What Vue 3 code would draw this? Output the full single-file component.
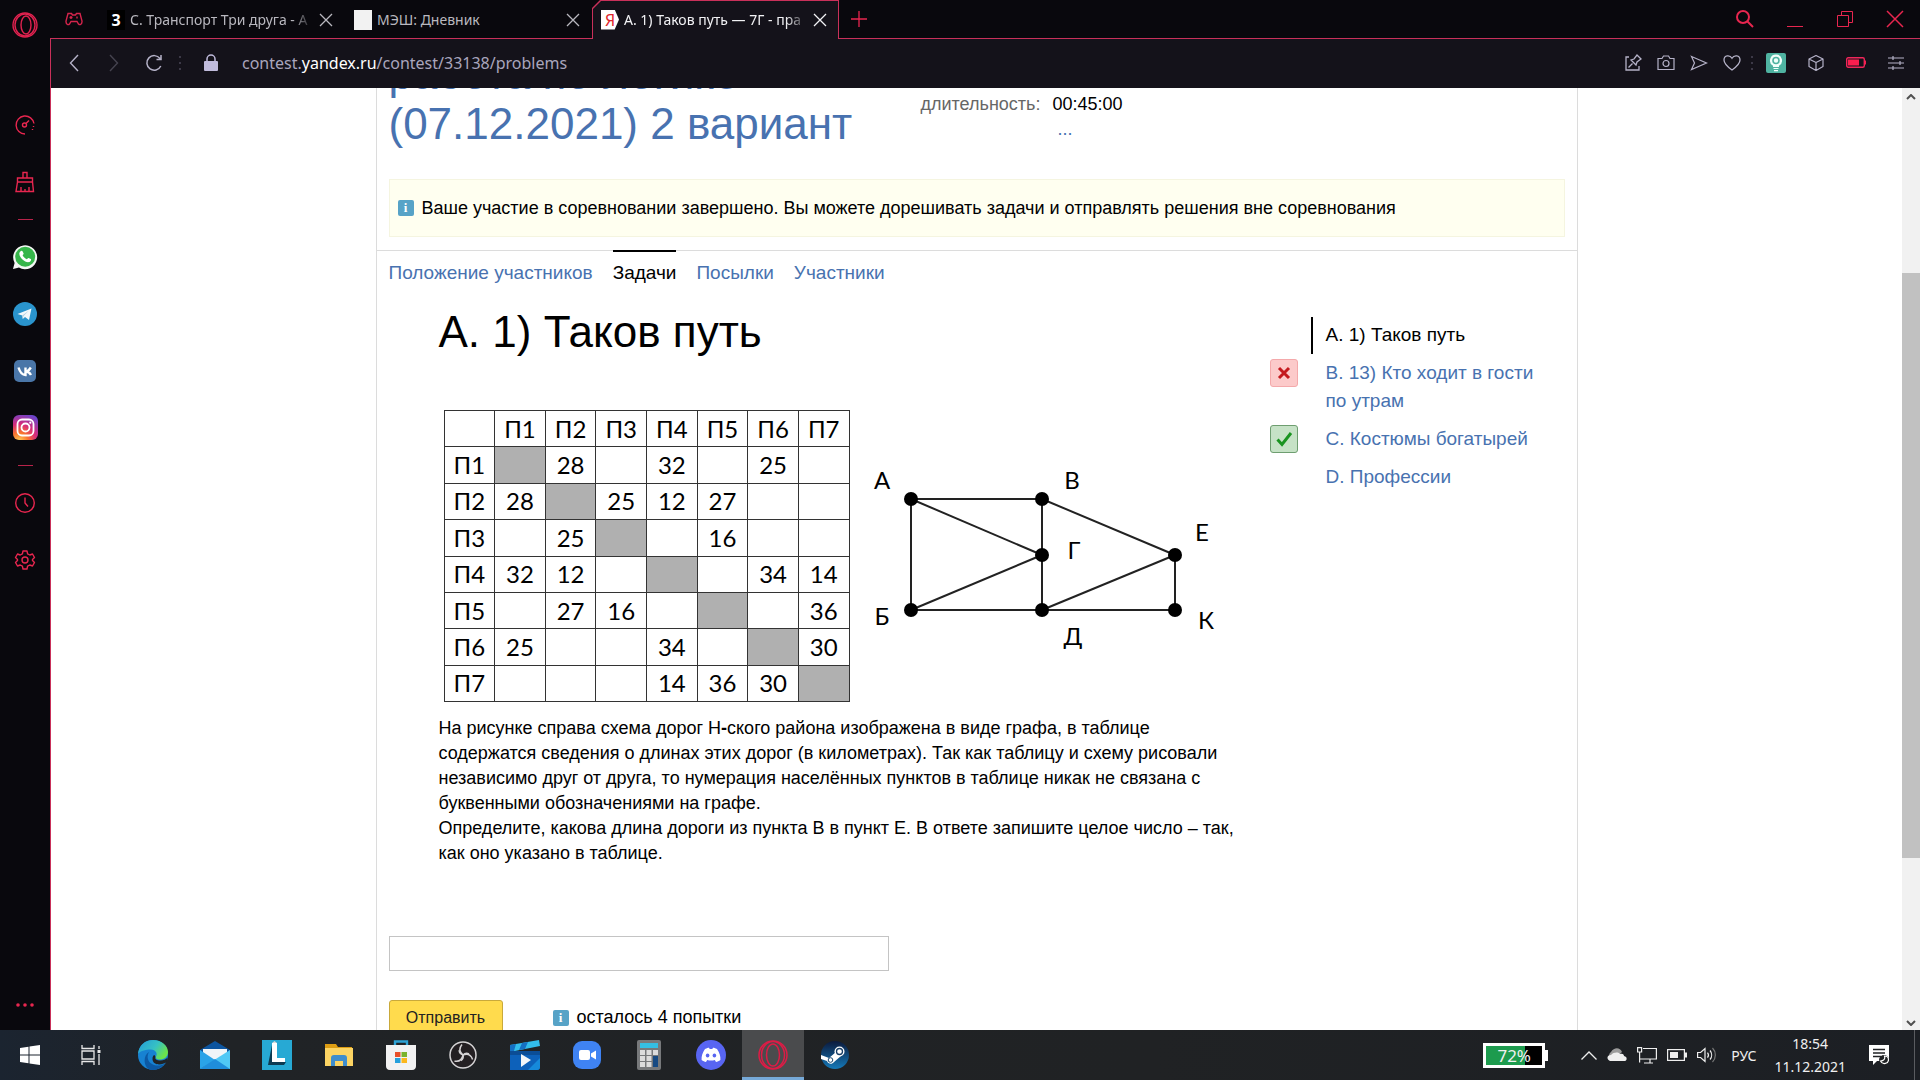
<template>
    <div class="desktop">
        <div class="browser">
            <nav class="sidebar" aria-label="Боковая панель">
                <a href="#" class="side-item side-logo" aria-label="Opera">
                    <svg width="26" height="30" viewBox="0 0 26 30" fill="none" stroke="#e0224f" stroke-width="1.4">
                        <ellipse cx="13" cy="15" rx="12" ry="12" />
                        <ellipse cx="13" cy="15" rx="10" ry="11" />
                        <ellipse cx="14" cy="15" rx="5" ry="9" />
                    </svg>
                </a>
                <a href="#" class="side-item" aria-label="Скорость">
                    <svg width="22" height="22" viewBox="0 0 22 22" fill="none" stroke="#e8264f" stroke-width="1.4">
                        <path d="M11 20A9 9 0 1 1 20 9.500M19.500 12v1M18.500 15v1" />
                        <circle cx="10.500" cy="11" r="2" />
                        <path d="M12 9.500L15 6.500" />
                    </svg>
                </a>
                <a href="#" class="side-item" aria-label="Очистка">
                    <svg width="22" height="22" viewBox="0 0 22 22" fill="none" stroke="#e8264f" stroke-width="1.400">
                        <path d="M9 7V1.500h4V7M3.500 7h15v4h-15zM3.500 11L2 20.500h17.500L18.500 11M7 20v-4M11 20v-2M15 20v-4" />
                    </svg>
                </a>
                <hr class="side-line">
                <a href="#" class="side-item" aria-label="WhatsApp">
                    <svg width="26" height="26" viewBox="0 0 26 26">
                        <path d="M1 25L2.600 19A12 12 0 1 1 7 23.600z" fill="#f4f7f4" />
                        <circle cx="13.200" cy="12.800" r="10" fill="#36b64a" />
                        <path d="M8.300 7.600c1-1.300 2-1 2.500.2l.8 1.800c.2.600-.8 1.300-1 1.700.8 1.800 2.300 3.200 4.200 3.900.5-.3 1.200-1.500 1.800-1.300l2.200 1.100c.8.600-.2 2.500-1.500 3-3.900 1.200-10.600-4.600-9.900-8.900.1-.5.500-1.100.9-1.500z" fill="#fff" />
                    </svg>
                </a>
                <a href="#" class="side-item" aria-label="Telegram">
                    <svg width="24" height="24" viewBox="0 0 24 24">
                        <circle cx="12" cy="12" r="12" fill="#2a94cd" />
                        <path d="M4.500 12L18.500 6.500 16 18l-4-3-2.200 2-.5-3.600z" fill="#f3f8fb" />
                        <path d="M9.300 13.400L16 8.600 10.500 14l-.7 3z" fill="#b3cfe0" />
                    </svg>
                </a>
                <a href="#" class="side-item" aria-label="ВКонтакте">
                    <svg width="22" height="22" viewBox="0 0 22 22">
                        <rect width="22" height="22" rx="5" fill="#4a76a8" />
                        <path d="M4.500 7.500c1.500 5 3.500 7.500 7 7.500V7.500M12 11.500c2 0 3.200-1.500 4.800-4M12 11.500c2.200 0 3.700 1.300 5 3.500" fill="none" stroke="#fff" stroke-width="2.400" />
                    </svg>
                </a>
                <a href="#" class="side-item" aria-label="Instagram">
                    <svg width="25" height="25" viewBox="0 0 25 25">
                        <defs>
                            <radialGradient id="insta" cx=".25" cy="1.050" r="1.150">
                                <stop offset="0" stop-color="#ffd25a" />
                                <stop offset=".3" stop-color="#f9752f" />
                                <stop offset=".6" stop-color="#d62b7b" />
                                <stop offset="1" stop-color="#6a45cc" />
                            </radialGradient>
                        </defs>
                        <rect width="25" height="25" rx="6" fill="url(#insta)" />
                        <rect x="4.500" y="4.500" width="16" height="16" rx="4.500" fill="none" stroke="#fff" stroke-width="1.800" />
                        <circle cx="12.500" cy="12.500" r="4" fill="none" stroke="#fff" stroke-width="1.800" />
                        <circle cx="17.300" cy="7.700" r="1.100" fill="#fff" />
                    </svg>
                </a>
                <hr class="side-line">
                <a href="#" class="side-item" aria-label="История">
                    <svg width="22" height="22" viewBox="0 0 22 22" fill="none" stroke="#e8264f" stroke-width="1.400">
                        <circle cx="11" cy="11" r="9.300" />
                        <path d="M11 5.500V11l3 3.500" />
                    </svg>
                </a>
                <a href="#" class="side-item" aria-label="Настройки">
                    <svg width="22" height="22" viewBox="0 0 22 22" fill="none" stroke="#e8264f" stroke-width="1.400" stroke-linejoin="round">
                        <path d="M9 2h4l.6 2.800 2.200 1.200 2.700-1 2 3.500-2 1.900v1.200l2 1.900-2 3.500-2.700-1-2.200 1.200L13 20H9l-.6-2.800L6.200 16l-2.700 1-2-3.500 2-1.900v-1.200l-2-1.900 2-3.500 2.700 1 2.200-1.200z" />
                        <circle cx="11" cy="11" r="3" />
                    </svg>
                </a>
                <a href="#" class="side-item side-more" aria-label="Ещё">
                    <svg width="20" height="4" viewBox="0 0 20 4" fill="#e8264f">
                        <circle cx="3" cy="2" r="1.800" />
                        <circle cx="10" cy="2" r="1.800" />
                        <circle cx="17" cy="2" r="1.800" />
                    </svg>
                </a>
            </nav>

            <div class="window">
                <div class="tabs">
                    <button class="corner" aria-label="GX">
                        <svg width="18" height="14" viewBox="0 0 18 14" fill="none" stroke="#d5244c" stroke-width="1.400">
                            <path d="M3 1.500h3.500l1 1.500h3l1-1.500H15L17 9c.2 3-2 4.500-3.500 3L12 9.500H6L4.500 12C3 13.500.800 12 1 9z" />
                            <path d="M4.500 5.500h3M6 4v3M12 4.500v2" />
                        </svg>
                    </button>
                    <div v-for="tab in tabs" :key="tab.title" class="tab" :class="{ active: tab.active }">
                        <span v-if="tab.icon === 'three'" class="fav fav-three">3</span>
                        <span v-else-if="tab.icon === 'blank'" class="fav fav-blank"></span>
                        <span v-else class="fav fav-ya">Я</span>
                        <span class="tab-title" :class="{ fade: tab.long }">{{ tab.title }}</span>
                        <button class="tab-close" aria-label="Закрыть вкладку">
                            <svg width="14" height="14" viewBox="0 0 14 14" stroke="currentColor" stroke-width="1.300">
                                <path d="M1 1l12 12M13 1L1 13" />
                            </svg>
                        </button>
                    </div>
                    <button class="new-tab" aria-label="Новая вкладка">
                        <svg width="16" height="16" viewBox="0 0 16 16" stroke="#e8264f" stroke-width="1.300"><path d="M8 0v16M0 8h16" /></svg>
                    </button>
                    <div class="controls">
                        <button aria-label="Поиск">
                            <svg width="20" height="20" viewBox="0 0 20 20" fill="none" stroke="#e8264f" stroke-width="2">
                                <circle cx="8" cy="8" r="6" /><path d="M12.500 12.500L18 18" />
                            </svg>
                        </button>
                        <button aria-label="Свернуть">
                            <svg width="18" height="18" viewBox="0 0 18 18" stroke="#e8264f"><path d="M1 16.500h16" /></svg>
                        </button>
                        <button aria-label="Развернуть">
                            <svg width="18" height="18" viewBox="0 0 18 18" fill="none" stroke="#e8264f">
                                <path d="M1.500 5.500h11v11h-11zM5.500 5V1.500h11v11H13" />
                            </svg>
                        </button>
                        <button aria-label="Закрыть">
                            <svg width="18" height="18" viewBox="0 0 18 18" stroke="#e8264f" stroke-width="1.500"><path d="M1 1l16 16M17 1L1 17" /></svg>
                        </button>
                    </div>
                </div>

                <div class="toolbar">
                    <button class="nav-btn" aria-label="Назад">
                        <svg width="10" height="18" viewBox="0 0 10 18" fill="none" stroke="#b5b2c8" stroke-width="1.400"><path d="M9 1L1.500 9 9 17" /></svg>
                    </button>
                    <button class="nav-btn" aria-label="Вперёд">
                        <svg width="10" height="18" viewBox="0 0 10 18" fill="none" stroke="#45434f" stroke-width="1.400"><path d="M1 1l7.500 8L1 17" /></svg>
                    </button>
                    <button class="nav-btn" aria-label="Обновить">
                        <svg width="18" height="18" viewBox="0 0 18 18" fill="none" stroke="#b5b2c8" stroke-width="1.500">
                            <path d="M15.800 12A7.300 7.300 0 1 1 15 4.500M16 1v4.500h-4.500" />
                        </svg>
                    </button>
                    <span class="dots"></span>
                    <svg class="lock" width="14" height="18" viewBox="0 0 14 18">
                        <rect x="0" y="7" width="14" height="10" rx="1" fill="#c0bbdc" />
                        <path d="M3 8V5a4 4 0 0 1 8 0v3" fill="none" stroke="#c0bbdc" stroke-width="1.500" />
                    </svg>
                    <div class="url">contest.<b>yandex.ru</b>/contest/33138/problems</div>
                    <button class="tool" aria-label="Закрепить">
                        <svg width="18" height="18" viewBox="0 0 18 18" fill="none" stroke="#b5b2c8" stroke-width="1.300">
                            <path d="M5 3H2v13h13v-4M4.500 13.500L8.500 9.500M7 6l5 5 1-3 4-3-4-4-3 4z" />
                        </svg>
                    </button>
                    <button class="tool" aria-label="Снимок">
                        <svg width="18" height="16" viewBox="0 0 18 16" fill="none" stroke="#b5b2c8" stroke-width="1.200">
                            <path d="M1 3.500h4L6.500 1h5L13 3.500h4v11H1z" /><circle cx="9" cy="8.500" r="3" />
                        </svg>
                    </button>
                    <button class="tool" aria-label="Мой поток">
                        <svg width="18" height="16" viewBox="0 0 18 16" fill="none" stroke="#b5b2c8" stroke-width="1.200"><path d="M1.500 1.500L16.500 8l-15 6.500L4.500 8z" /></svg>
                    </button>
                    <button class="tool" aria-label="В закладки">
                        <svg width="18" height="16" viewBox="0 0 18 16" fill="none" stroke="#b5b2c8" stroke-width="1.300">
                            <path d="M9 3.200C7-.3 1-.2 1 5c0 4 4.500 7.500 8 10 3.500-2.500 8-6 8-10 0-5.200-6-5.300-8-1.800z" />
                        </svg>
                    </button>
                    <span class="dots dots-narrow"></span>
                    <button class="tool tool-wide" aria-label="Расширение">
                        <svg width="20" height="20" viewBox="0 0 20 20">
                            <rect width="20" height="20" rx="2" fill="#4fb3a1" />
                            <path d="M10 1.500a6 6 0 0 1 3 11.200V14H7v-1.300A6 6 0 0 1 10 1.500zM7.500 15h5v1h-5zM8 17h4v1.300H8z" fill="#f2fffb" />
                            <circle cx="10" cy="7.500" r="3" fill="none" stroke="#4fb3a1" stroke-width="1.600" />
                        </svg>
                    </button>
                    <button class="tool tool-wide" aria-label="Расширения">
                        <svg width="16" height="18" viewBox="0 0 16 18" fill="none" stroke="#b5b2c8" stroke-width="1.200" stroke-linejoin="round">
                            <path d="M8 1.500l7 3.500v7.500L8 16.500 1 12.500V5zM1 5l7 3.500L15 5M8 8.500v8" />
                        </svg>
                    </button>
                    <button class="tool tool-wide" aria-label="Батарея">
                        <svg width="20" height="11" viewBox="0 0 20 11">
                            <rect x=".7" y=".7" width="17.600" height="9.600" rx="1.500" fill="none" stroke="#f0265a" stroke-width="1.400" />
                            <path d="M2 2.500h11v6H2zM18.500 3.500H20v4h-1.500z" fill="#fa1e4e" />
                        </svg>
                    </button>
                    <button class="tool tool-wide" aria-label="Простая настройка">
                        <svg width="16" height="14" viewBox="0 0 16 14" fill="none" stroke="#b5b2c8" stroke-width="1.200">
                            <path d="M0 2h16M0 7h16M0 12h16M5 0v4M12 5v4M5 10v4" />
                        </svg>
                    </button>
                </div>

                <div class="viewport">
                    <main class="page">
                        <div class="sheet">
                            <header class="contest">
                                <h1><a href="#">работа по логике<br>(07.12.2021) 2 вариант</a></h1>
                                <dl>
                                    <dt>длительность:</dt>
                                    <dd>00:45:00</dd>
                                    <dd class="more"><a href="#">...</a></dd>
                                </dl>
                            </header>

                            <div class="notice">
                                <span class="info">i</span>
                                Ваше участие в соревновании завершено. Вы можете дорешивать задачи и отправлять решения вне соревнования
                            </div>

                            <nav class="menu">
                                <a v-for="item in menu" :key="item" href="#" :class="{ current: item === 'Задачи' }">{{ item }}</a>
                            </nav>

                            <div class="columns">
                                <article class="problem">
                                    <h2>A. 1) Таков путь</h2>
                                    <div class="figure">
                                        <table>
                                            <tbody>
                                                <tr v-for="(row, r) in roads" :key="r">
                                                    <td v-for="(cell, c) in row" :key="c" :class="{ same: r === c && r > 0 }">{{ cell }}</td>
                                                </tr>
                                            </tbody>
                                        </table>
                                        <svg class="graph" width="370" height="291" viewBox="850 410 370 291">
                                            <line v-for="e in edges" :key="e" :x1="nodes[e[0]].x" :y1="nodes[e[0]].y" :x2="nodes[e[1]].x" :y2="nodes[e[1]].y" />
                                            <g v-for="(n, name) in nodes" :key="name">
                                                <circle :cx="n.x" :cy="n.y" r="7" />
                                                <text :x="n.tx" :y="n.ty">{{ name }}</text>
                                            </g>
                                        </svg>
                                    </div>
                                    <p>
                                        На рисунке справа схема дорог Н<b>-</b>ского района изображена в виде графа, в таблице
                                        содержатся сведения о длинах этих дорог (в километрах). Так как таблицу и схему рисовали
                                        независимо друг от друга, то нумерация населённых пунктов в таблице никак не связана с
                                        буквенными обозначениями на графе.<br>
                                        Определите, какова длина дороги из пункта В в пункт Е. В ответе запишите целое число – так,
                                        как оно указано в таблице.
                                    </p>
                                </article>

                                <ul class="problems">
                                    <li v-for="p in problems" :key="p.title" :class="{ selected: p.selected }">
                                        <span v-if="p.status" class="status" :class="p.status">
                                            <svg v-if="p.status === 'bad'" width="14" height="14" viewBox="0 0 14 14" stroke="#c41a1f" stroke-width="3"><path d="M2 2l10 10M12 2L2 12" /></svg>
                                            <svg v-else width="18" height="16" viewBox="0 0 18 16" fill="none" stroke="#1a9420" stroke-width="3"><path d="M2.500 8.500L7 13.500 16 2" /></svg>
                                        </span>
                                        <a href="#">{{ p.title }}</a>
                                    </li>
                                </ul>
                            </div>

                            <form class="answer" @submit.prevent>
                                <input v-model="answer" type="text" aria-label="Ответ">
                                <div class="send">
                                    <button type="submit">Отправить</button>
                                    <span class="attempts"><span class="info">i</span>осталось 4 попытки</span>
                                </div>
                            </form>
                        </div>
                    </main>
                    <div class="scrollbar">
                        <svg width="10" height="6" viewBox="0 0 10 6" fill="none" stroke="#505050" stroke-width="2"><path d="M1 5l4-4 4 4" /></svg>
                        <div class="track"><div class="thumb"></div></div>
                        <svg width="10" height="6" viewBox="0 0 10 6" fill="none" stroke="#505050" stroke-width="2"><path d="M1 1l4 4 4-4" /></svg>
                    </div>
                </div>
            </div>
        </div>

        <footer class="taskbar">
            <button class="app start" aria-label="Пуск">
                <svg width="20" height="20" viewBox="0 0 20 20" fill="#fff"><path d="M0 3l8.500-1.300v7.800H0zM9.500 1.500L20 0v9.500H9.500zM0 10.500h8.500v7.800L0 17zM9.500 10.500H20V20L9.500 18.500z" /></svg>
            </button>
            <button class="app" aria-label="Представление задач">
                <svg width="20" height="20" viewBox="0 0 20 20" fill="none" stroke="#e8e8e8" stroke-width="1.300">
                    <path d="M1 0v3.500h12V0M1 20v-3.500h12V20M1 6h12v8H1zM18 1v3M18 9v11" /><path d="M16.500 6.500h3" stroke-width="3" />
                </svg>
            </button>
            <button class="app" aria-label="Edge">
                <svg width="30" height="30" viewBox="0 0 30 30">
                    <defs>
                        <linearGradient id="edge" x1="0" y1="0" x2="1" y2=".5">
                            <stop offset="0" stop-color="#239bd8" /><stop offset=".6" stop-color="#36c1c4" /><stop offset="1" stop-color="#6be34c" />
                        </linearGradient>
                    </defs>
                    <circle cx="15" cy="15" r="15" fill="#1782d2" />
                    <path d="M0 14C1 5 7 0 15 0c9 0 15 6 15 12 0 5-4 7.500-8 7.500-3.500 0-5-1.500-4-3 2-3-.5-7-5-7C7 9.500 2 11 0 14z" fill="url(#edge)" />
                    <path d="M11 12c-3 5-1 11 5 13 4 1.300 8 .5 11-2-3 5-9 8-15 6.700C5 27 5 15 11 12z" fill="#0c59a4" />
                    <path d="M17.500 17c-1 2 1 3.500 5 3.500 3 0 5.500-1 7-3v4c-4 3.500-14 5-15-2-.2-3 1-4.500 2-4.500z" fill="#202326" />
                </svg>
            </button>
            <button class="app" aria-label="Почта">
                <svg width="30" height="28" viewBox="0 0 30 28">
                    <path d="M0 9L15 0l15 9v4H0z" fill="#0d559f" /><path d="M3 8h24v12H3z" fill="#f1f5f8" />
                    <path d="M0 9l15 10L0 28z" fill="#2aa3e8" /><path d="M30 9L0 28h30z" fill="#50c8f5" /><path d="M0 28l15-10 15 10z" fill="#1f8ddb" />
                </svg>
            </button>
            <button class="app" aria-label="L">
                <svg width="30" height="30" viewBox="0 0 30 30">
                    <rect width="30" height="30" fill="#27a9d4" /><path d="M10 5L6 25h16l2-3H10z" fill="#0d3b52" />
                    <path d="M10 3h5v15h8v4H10z" fill="#fff" /><path d="M10 3l2.500-2L15 3z" fill="#d9d9d9" />
                </svg>
            </button>
            <button class="app" aria-label="Проводник">
                <svg width="28" height="24" viewBox="0 0 28 24">
                    <path d="M0 1h11l2 3h14v5H0z" fill="#dd9d13" /><path d="M0 5h28v18H0z" fill="#fcd463" />
                    <path d="M6 23v-8c0-2 1-3 3-3h10c2 0 3 1 3 3v8h-4v-5h-8v5z" fill="#3f8dcc" />
                </svg>
            </button>
            <button class="app" aria-label="Microsoft Store">
                <svg width="30" height="30" viewBox="0 0 30 30">
                    <path d="M9 6V1.500h12V6" fill="none" stroke="#2da3d5" stroke-width="2.400" />
                    <path d="M0 5h30v21c0 2-1 4-4 4H4c-3 0-4-2-4-4z" fill="#f2f2f2" />
                    <path d="M9 12h5.500v5H9z" fill="#e8502a" /><path d="M15.500 12H21v5h-5.500z" fill="#7ab32c" />
                    <path d="M9 18h5.500v5H9z" fill="#25a0dc" /><path d="M15.500 18H21v5h-5.500z" fill="#fbb71c" />
                </svg>
            </button>
            <button class="app" aria-label="OBS">
                <svg width="28" height="28" viewBox="0 0 28 28" fill="none" stroke="#d4d2d4" stroke-width="1.500">
                    <circle cx="14" cy="14" r="13" fill="#231f22" />
                    <path v-for="angle in [0, 120, 240]" :key="angle" :transform="`rotate(${angle} 14 14)`" d="M14 14C10.500 11 10 7 13 3.500M14 14c1.500-1.500 4-2 6-1" />
                </svg>
            </button>
            <button class="app" aria-label="Кино">
                <svg width="30" height="30" viewBox="0 0 30 30">
                    <path d="M0 13h30v14c0 2-1 3-3 3H0z" fill="#0d61ba" /><path d="M18 30L30 18v9c0 2-1 3-3 3z" fill="#1689da" />
                    <path d="M0 5L29 0l1 6-30 6z" fill="#32bdeb" /><path d="M0 5l6-1-2 7-4 1zM12 3l6-1-3 7-6 1z" fill="#1470c4" />
                    <path d="M0 11h30v4H0z" fill="#0b4d96" /><path d="M11 14l10 6-10 7z" fill="#f3f6f9" />
                </svg>
            </button>
            <button class="app" aria-label="Zoom">
                <svg width="28" height="28" viewBox="0 0 28 28">
                    <rect width="28" height="28" rx="9" fill="#3f83f3" /><rect x="6" y="9" width="11" height="10" rx="2" fill="#fff" /><path d="M18 12.500l5-3v9l-5-3z" fill="#fff" />
                </svg>
            </button>
            <button class="app" aria-label="Калькулятор">
                <svg width="24" height="30" viewBox="0 0 24 30">
                    <rect width="24" height="30" rx="2" fill="#77797b" /><path d="M3 3h18v5H3z" fill="#35bfe3" />
                    <path d="M3 10h5v5H3zM9.500 10h5v5h-5zM16 10h5v5h-5zM3 16h5v5H3zM9.500 16h5v5h-5zM3 22h5v5H3zM9.500 22h5v5h-5z" fill="#dcdcdc" />
                    <path d="M16 16h5v11h-5z" fill="#174a83" />
                </svg>
            </button>
            <button class="app" aria-label="Discord">
                <svg width="30" height="30" viewBox="0 0 30 30">
                    <circle cx="15" cy="15" r="15" fill="#5865f2" />
                    <path d="M9 9c2-1 3-1.300 4-1.300l.7 1.300h2.600l.7-1.300c1 0 2 .3 4 1.300 2.500 3.500 3.700 7.500 3.400 11-1.500 1.200-3 1.800-4.400 2l-1.200-2c-2.500.7-5.100.7-7.600 0l-1.200 2c-1.400-.2-2.900-.8-4.400-2C5.300 16.500 6.500 12.500 9 9z" fill="#fff" />
                    <ellipse cx="11.600" cy="15.600" rx="1.800" ry="2" fill="#5865f2" /><ellipse cx="18.400" cy="15.600" rx="1.800" ry="2" fill="#5865f2" />
                </svg>
            </button>
            <button class="app running" aria-label="Opera GX">
                <svg width="30" height="30" viewBox="0 0 30 30" fill="none" stroke="#dc1c46" stroke-width="1.500">
                    <circle cx="15" cy="15" r="14" /><ellipse cx="15" cy="15" rx="11.500" ry="13.500" /><ellipse cx="15" cy="15" rx="6.500" ry="11" />
                </svg>
            </button>
            <button class="app" aria-label="Steam">
                <svg width="28" height="28" viewBox="0 0 28 28">
                    <defs>
                        <linearGradient id="steam" x1="0" y1="0" x2="0" y2="1"><stop offset="0" stop-color="#0c1a3c" /><stop offset="1" stop-color="#1579b8" /></linearGradient>
                    </defs>
                    <circle cx="14" cy="14" r="14" fill="url(#steam)" />
                    <path d="M0 14l8 3 7-6 5 4-7 6c-2 3-6 2-7-1l-6-2z" fill="#fff" />
                    <circle cx="18.500" cy="10.500" r="5" fill="#fff" /><circle cx="18.500" cy="10.500" r="3" fill="none" stroke="#163d66" stroke-width="1.300" />
                    <circle cx="9.500" cy="19" r="2.300" fill="none" stroke="#17466f" />
                </svg>
            </button>

            <div class="tray">
                <div class="charge"><span>72%</span></div>
                <svg width="16" height="9" viewBox="0 0 16 9" fill="none" stroke="#eee" stroke-width="1.300"><path d="M.5 8.500L8 1l7.500 7.500" /></svg>
                <svg width="20" height="14" viewBox="0 0 20 14">
                    <path d="M3 10a4 4 0 0 1 1-6c3-5 9-5 11 0l-9 8z" fill="#9c9c9c" />
                    <path d="M3 13c-4-2-3-6 1-6 3-3 7-3 9-1 3-1 4 1 4 2 4 1 3 5 0 5z" fill="#efefef" />
                </svg>
                <svg width="20" height="17" viewBox="0 0 20 17" fill="none" stroke="#eee" stroke-width="1.200">
                    <path d="M6 1.500h13.400v10.500H3M13 12v4M7 16h9M.6.600h4V5h-4zM2.600 5v10.500" />
                </svg>
                <svg width="20" height="12" viewBox="0 0 20 12"><rect x=".6" y=".6" width="16.800" height="10.800" fill="none" stroke="#eee" stroke-width="1.200" /><path d="M3 3h8v6H3zM18 3.500h2v5h-2z" fill="#eee" /></svg>
                <svg width="20" height="18" viewBox="0 0 20 18" fill="none" stroke="#eee" stroke-width="1.200">
                    <path d="M.6 6.500h3L8 2.500v13l-4.400-4H.6zM10.500 6.500a4 4 0 0 1 0 5M13 4.500a7 7 0 0 1 0 9" /><path d="M15.500 2a10 10 0 0 1 0 14" stroke="#777" />
                </svg>
                <span class="lang">РУС</span>
                <time class="clock">18:54<br>11.12.2021</time>
                <svg class="t-note" width="20" height="20" viewBox="0 0 20 20">
                    <path d="M0 0h20v16H8l-4 4v-4H0z" fill="#fff" /><path d="M4 4.500h12M4 8h12M4 11.500h8" stroke="#202224" stroke-width="1.300" />
                    <circle cx="15" cy="15" r="5" fill="#202224" /><path d="M15.500 11c1 3-1 5-4 5 2 4 8 3 8-1.500 0-2-2-3.500-4-3.500z" fill="none" stroke="#fff" stroke-width="1.200" />
                </svg>
                <span class="peek"></span>
            </div>
        </footer>
    </div>
</template>

<script setup>

    import { ref } from 'vue';

    const answer = ref('');

    const tabs = [
        { title: 'С. Транспорт Три друга - А', icon: 'three', long: true },
        { title: 'МЭШ: Дневник', icon: 'blank' },
        { title: 'A. 1) Таков путь — 7Г - пра', icon: 'ya', long: true, active: true },
    ];

    const menu = ['Положение участников', 'Задачи', 'Посылки', 'Участники'];

    // таблица расстояний, первая строка и столбец - заголовки
    const roads = [
        ['', 'П1', 'П2', 'П3', 'П4', 'П5', 'П6', 'П7'],
        ['П1', '', 28, '', 32, '', 25, ''],
        ['П2', 28, '', 25, 12, 27, '', ''],
        ['П3', '', 25, '', '', 16, '', ''],
        ['П4', 32, 12, '', '', '', 34, 14],
        ['П5', '', 27, 16, '', '', '', 36],
        ['П6', 25, '', '', 34, '', '', 30],
        ['П7', '', '', '', 14, 36, 30, ''],
    ];

    // вершины графа и места подписей
    const nodes = {
        А: { x: 911, y: 499, tx: 882, ty: 489 },
        В: { x: 1042, y: 499, tx: 1072, ty: 489 },
        Г: { x: 1042, y: 555, tx: 1074, ty: 559 },
        Б: { x: 911, y: 610, tx: 882, ty: 625 },
        Д: { x: 1042, y: 610, tx: 1073, ty: 645 },
        Е: { x: 1175, y: 555, tx: 1202, ty: 541 },
        К: { x: 1175, y: 610, tx: 1206, ty: 629 },
    };

    const edges = ['АВ', 'АБ', 'АГ', 'БГ', 'БД', 'ВГ', 'ГД', 'ВЕ', 'ДЕ', 'ДК', 'ЕК'];

    const problems = [
        { title: 'A. 1) Таков путь', selected: true },
        { title: 'B. 13) Кто ходит в гости по утрам', status: 'bad' },
        { title: 'C. Костюмы богатырей', status: 'good' },
        { title: 'D. Профессии' },
    ];

</script>

<style>
    body {
        margin: 0;
        overflow: hidden;
    }
</style>

<style scoped>
    * {
        box-sizing: border-box;
    }

    button {
        padding: 0;
        border: 0;
        background: none;
        display: flex;
        align-items: center;
        justify-content: center;
    }

    a {
        color: #4872b0;
        text-decoration: none;
    }

    svg {
        display: block;
        flex-shrink: 0;
    }

    .desktop {
        height: 100vh;
        display: flex;
        flex-direction: column;
        font-family: 'Noto Sans', 'Open Sans', sans-serif;
    }

    .browser {
        flex: 1;
        min-height: 0;
        display: flex;
        background: #09080d;
    }

    /* боковая панель */
    .sidebar {
        width: 50px;
        display: flex;
        flex-direction: column;
        align-items: center;
    }

    .side-item {
        width: 50px;
        height: 57px;
        display: flex;
        align-items: center;
        justify-content: center;
    }

    .side-logo {
        height: 50px;
        margin-bottom: 46px;
    }

    .side-line {
        width: 15px;
        height: 1px;
        margin: 9px 0 8px;
        border: 0;
        background: #b8234a;
    }

    .side-more {
        height: 50px;
        margin-top: auto;
    }

    .window {
        flex: 1;
        min-width: 0;
        display: flex;
        flex-direction: column;
    }

    /* вкладки */
    .tabs {
        height: 39px;
        display: flex;
        border-bottom: 1px solid #c9305a;
    }

    .corner {
        width: 48px;
    }

    .tab {
        width: 247px;
        display: flex;
        align-items: center;
        gap: 5px;
        padding: 1px 12px 0 9px;
        color: #b9b8bf;
        font-size: 14px;
    }

    .tab.active {
        position: relative;
        z-index: 0;
        margin-bottom: -1px;
        padding-top: 0;
        color: #f2f2f5;
        background: #c9305a;
        clip-path: polygon(8px 0, 100% 0, 100% 100%, 0 100%, 0 8px);
    }

    .tab.active::before {
        content: '';
        position: absolute;
        z-index: -1;
        inset: 1px 1px 0;
        background: #14121a;
        clip-path: polygon(8px 0, 100% 0, 100% 100%, 0 100%, 0 8px);
    }

    .fav {
        width: 18px;
        height: 20px;
        flex-shrink: 0;
        font-size: 16px;
        line-height: 20px;
        text-align: center;
    }

    .fav-three {
        color: #fff;
        background: #000;
        font-weight: bold;
    }

    .fav-blank {
        background: #f2f2f2;
    }

    .fav-ya {
        color: #e0262c;
        background: #fff;
        clip-path: polygon(0 0, 76% 0, 100% 50%, 76% 100%, 0 100%);
    }

    .tab-title {
        flex: 1;
        overflow: hidden;
        white-space: nowrap;
    }

    .tab-title.fade {
        mask-image: linear-gradient(90deg, #000 88%, transparent);
    }

    .tab-close {
        color: inherit;
    }

    .new-tab {
        width: 40px;
    }

    .controls {
        display: flex;
        margin-left: auto;
    }

    .controls button {
        width: 50px;
    }

    /* адресная строка */
    .toolbar {
        height: 49px;
        padding: 0 4px 2px 3px;
        display: flex;
        align-items: center;
        background: #14121a;
        border-left: 1px solid #c9305a;
    }

    .nav-btn {
        width: 40px;
        height: 40px;
    }

    .dots {
        width: 2px;
        height: 14px;
        margin: 0 23px 0 5px;
        background: repeating-linear-gradient(#3c3947 0 2px, transparent 2px 6px);
    }

    .dots-narrow {
        margin: 0 3px;
    }

    .lock {
        margin-right: 24px;
    }

    .url {
        flex: 1;
        color: #a9a5bd;
        font-size: 16px;
    }

    .url b {
        color: #fff;
        font-weight: normal;
    }

    .tool {
        width: 33px;
        height: 40px;
    }

    .tool-wide {
        width: 40px;
    }

    /* страница */
    .viewport {
        flex: 1;
        min-height: 0;
        display: flex;
        background: #fff;
        border-left: 1px solid #c9305a;
    }

    .page {
        flex: 1;
        overflow: hidden;
        font-family: 'Liberation Sans', Arial, sans-serif;
        font-size: 18px;
        color: #000;
    }

    .sheet {
        max-width: 1202px;
        margin: -39px auto 0;
        padding: 0 12px;
        border: solid #dcdcdc;
        border-width: 0 1px;
    }

    h1,
    h2 {
        margin: 0;
        font-size: 44px;
        line-height: 50px;
        font-weight: normal;
    }

    .contest {
        display: flex;
    }

    .contest h1 {
        width: 532px;
    }

    dl {
        display: grid;
        grid-template-columns: auto auto;
        column-gap: 12px;
        align-self: flex-end;
        margin: 0 0 7px;
        line-height: 25px;
    }

    dt {
        color: #666;
    }

    dd {
        margin: 0;
    }

    dd.more {
        grid-column: 2;
        padding-left: 5px;
    }

    .notice {
        height: 58px;
        margin: 30px 0 13px;
        padding: 0 8px;
        display: flex;
        align-items: center;
        gap: 8px;
        background: #fffff0;
        border: 1px solid #f5f5e0;
    }

    .info {
        width: 16px;
        height: 16px;
        border-radius: 2px;
        background: #57a3c7;
        color: #fff;
        font: bold 13px/16px 'Liberation Serif', serif;
        text-align: center;
    }

    .menu {
        margin: 0 -12px;
        padding: 0 12px;
        display: flex;
        gap: 20px;
        border-top: 1px solid #dcdcdc;
        font-size: 19px;
    }

    .menu a {
        height: 42px;
        margin-top: -1px;
        border-top: 2px solid transparent;
        line-height: 41px;
    }

    .menu a.current {
        color: #000;
        border-color: #000;
    }

    .columns {
        display: flex;
        justify-content: space-between;
        margin-top: 15px;
    }

    .problem {
        width: 850px;
        padding-left: 50px;
    }

    .figure {
        display: flex;
        margin-top: 53px;
        padding-left: 5px;
        font-family: Lato, 'Noto Sans', sans-serif;
        font-size: 24px;
    }

    table {
        width: 406px;
        height: 292px;
        table-layout: fixed;
        border-collapse: collapse;
    }

    td {
        padding: 0;
        border: 1px solid #333;
        line-height: 30px;
        text-align: center;
    }

    td.same {
        background: #b0b0b0;
    }

    .graph line {
        stroke: #222;
        stroke-width: 2;
    }

    .graph text {
        text-anchor: middle;
    }

    .problem p {
        margin: 14px 0 0;
        line-height: 25px;
    }

    .problems {
        width: 295px;
        margin: 14px 0 0;
        padding: 0;
        list-style: none;
        font-size: 19px;
        line-height: 28px;
    }

    .problems li {
        position: relative;
        margin-bottom: 10px;
        padding: 0 30px 0 56px;
    }

    .problems li.selected a {
        color: #000;
    }

    .problems li.selected::before {
        content: '';
        position: absolute;
        left: 41px;
        top: -4px;
        width: 2px;
        height: 37px;
        background: #000;
    }

    .status {
        position: absolute;
        left: 0;
        top: 0;
        width: 28px;
        height: 28px;
        display: flex;
        align-items: center;
        justify-content: center;
        border-radius: 3px;
    }

    .status.bad {
        background: #fccaca;
        border: 1px solid #f4a9ab;
    }

    .status.good {
        background: #c6e2c6;
        border: 1px solid #6e9e70;
    }

    .answer {
        margin-top: 70px;
    }

    .answer input {
        display: block;
        width: 500px;
        height: 35px;
        border: 1px solid #c4c4c4;
        font-size: 18px;
    }

    .send {
        display: flex;
        align-items: center;
        margin-top: 29px;
    }

    .send button {
        width: 114px;
        height: 35px;
        border: 1px solid #c9a93a;
        border-radius: 3px;
        background: #ffdb4d;
        font: 16px 'Liberation Sans', Arial, sans-serif;
        color: #222;
    }

    .attempts {
        display: flex;
        align-items: center;
        gap: 8px;
        margin-left: 50px;
    }

    .scrollbar {
        width: 18px;
        padding: 6px 0 4px;
        display: flex;
        flex-direction: column;
        align-items: center;
        gap: 6px;
        background: #f1f1f1;
    }

    .track {
        flex: 1;
        width: 100%;
        padding-top: 167px;
    }

    .thumb {
        height: 585px;
        background: #c1c1c1;
    }

    /* панель задач */
    .taskbar {
        height: 50px;
        display: flex;
        background: linear-gradient(90deg, #1b2430, #202326 12%, #202224 60%, #1c1f24);
    }

    .app {
        width: 62px;
        height: 50px;
    }

    .app.running {
        background: #4a4b4d;
        border-bottom: 3px solid #76a9d8;
        padding-top: 3px;
    }

    .app.start {
        width: 60px;
    }

    .tray {
        margin-left: auto;
        display: flex;
        align-items: center;
        gap: 10px;
        padding-right: 5px;
        color: #f0f0f0;
        font-size: 14px;
    }

    .charge {
        position: relative;
        width: 62px;
        height: 25px;
        margin-right: 26px;
        border: 3px solid #fff;
        background: linear-gradient(90deg, #1d9b4e 70%, #000 70%);
        font-size: 17px;
        line-height: 19px;
        text-align: center;
    }

    .charge::after {
        content: '';
        position: absolute;
        right: -6px;
        top: 4px;
        width: 3px;
        height: 11px;
        background: #fff;
    }

    .lang {
        margin: 0 8px 0 4px;
    }

    .clock {
        line-height: 23px;
        text-align: center;
    }

    .t-note {
        margin-left: 13px;
    }

    .peek {
        width: 1px;
        height: 50px;
        margin-left: 15px;
        background: #5a5c60;
    }
</style>
